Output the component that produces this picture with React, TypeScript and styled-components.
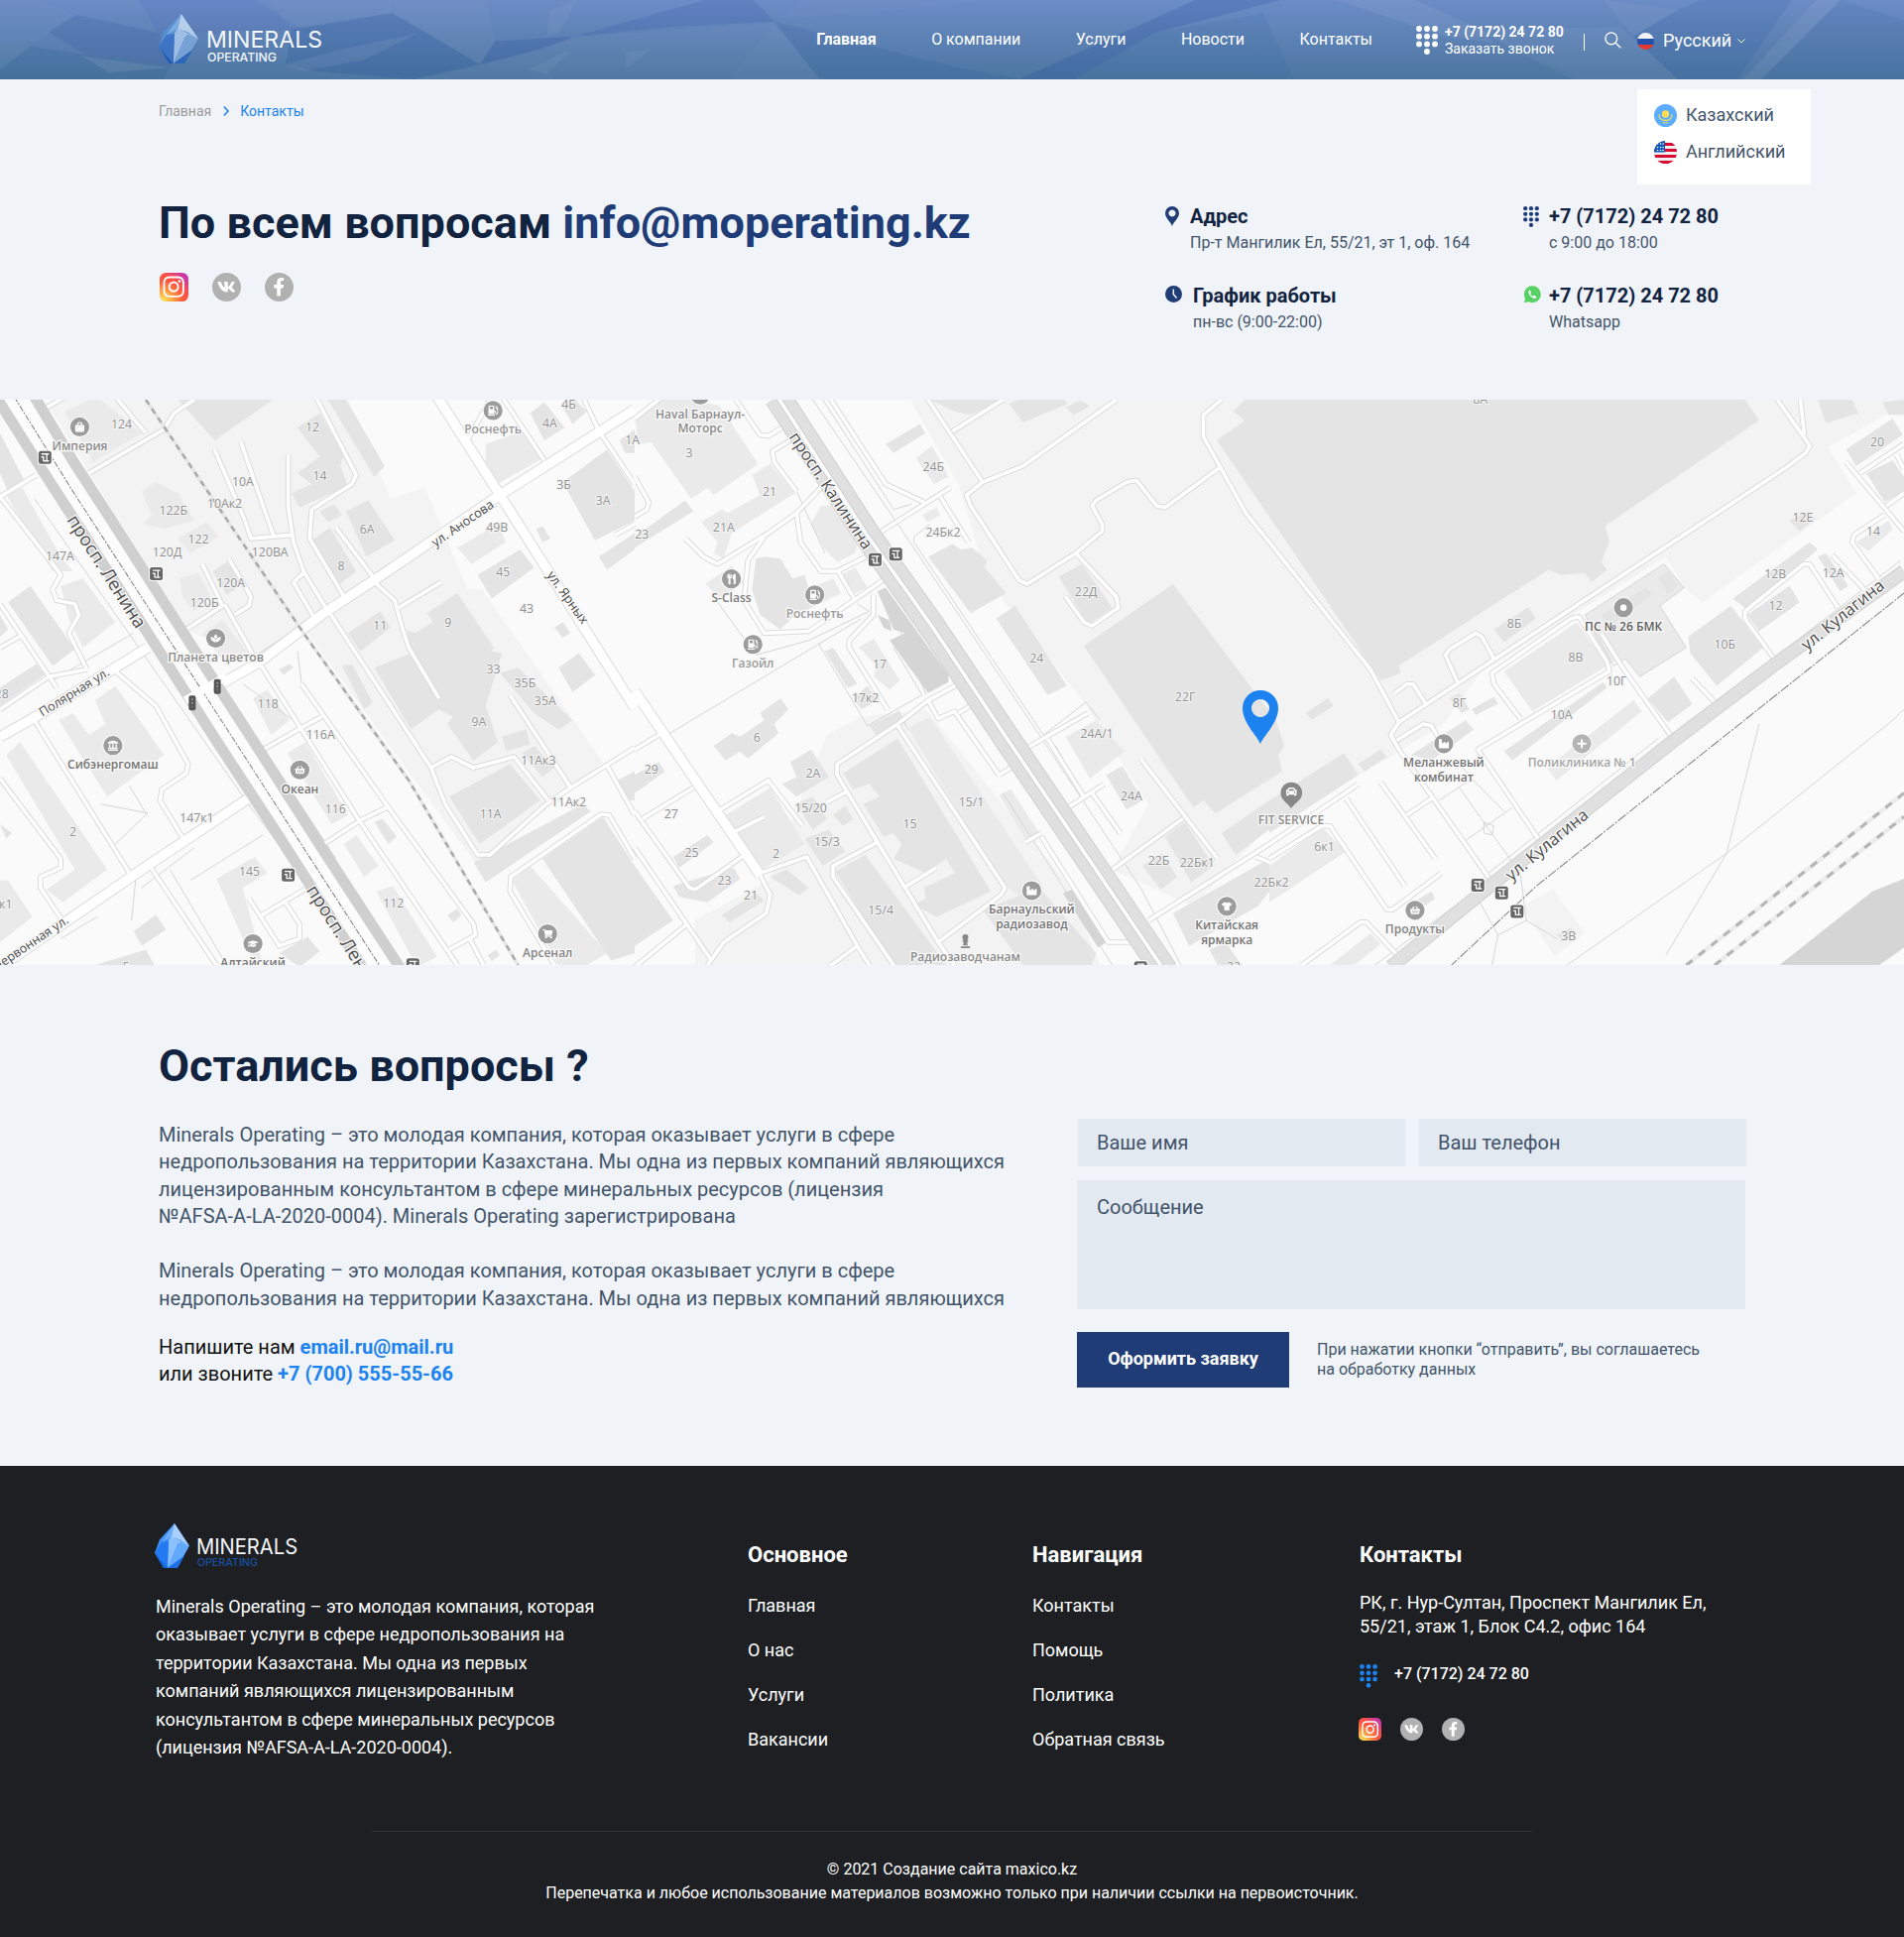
import React from 'react';
import styled, { createGlobalStyle } from 'styled-components';
import {
  FaShoppingBag, FaShoppingBasket, FaLandmark, FaGasPump, FaUtensils, FaIndustry, FaTshirt,
  FaShoppingCart, FaGraduationCap, FaPlus, FaCircle, FaCar, FaSpa, FaVk, FaFacebookF,
  FaInstagram, FaChessPawn,
} from 'react-icons/fa';

const GlobalStyle = createGlobalStyle`
  *, *::before, *::after { box-sizing: border-box; }
  html, body { margin: 0; padding: 0; }
  body { width: 1920px; background: #f0f4f9; font-family: Roboto, "Liberation Sans", sans-serif; color: #43546a; }
  h1, h2, h3, p, ul { margin: 0; padding: 0; }
  ul { list-style: none; }
  a { color: inherit; text-decoration: none; }
`;

const color = {
  ink: '#11233f', navy: '#203c76', slate: '#43546a', blue: '#1c82ef', field: '#e2e9f1', footer: '#1e1f23',
};

/* ---------- shared drawings ---------- */

const Crystal = ({ soft }: { soft?: boolean }) => (
  <g opacity={soft ? 0.86 : 1}>
    <path d="M20 0 L35 25 L23 50 L9 50 L0 33 L5 18Z" fill={soft ? '#5a95dc' : '#3f8df5'} />
    <path d="M20 0 L17 15 L7 21Z" fill={soft ? '#7fb3e6' : '#6aaefc'} />
    <path d="M20 0 L35 25 L25 18 L17 15Z" fill={soft ? '#c6dcf4' : '#a9d0ff'} />
    <path d="M17 15 L35 25 L14 20Z" fill="#eaf4ff" />
    <path d="M17 15 L25 19 L13 50 L14 20Z" fill={soft ? '#a9c8ec' : '#8cc0ff'} />
    <path d="M25 20 L35 25 L23 48 L13 50Z" fill={soft ? '#7da7dc' : '#63a9fb'} />
    <path d="M7 21 L14 20 L13 50 L0 33Z" fill={soft ? '#3973c8' : '#2379f2'} />
    <path d="M0 33 L9 50 L13 50Z" fill={soft ? '#1f57b4' : '#1161dd'} />
    <path d="M13 50 L30 36 L23 50Z" fill={soft ? '#2864bb' : '#1b6ee6'} />
  </g>
);

const LogoSvg = styled.svg`
  display: block;
  flex: none;
  overflow: visible;
`;

const Logo = ({ width, height, sub, soft }: { width: number; height: number; sub: string; soft?: boolean }) => (
  <LogoSvg width={width} height={height} viewBox="0 0 142 50" preserveAspectRatio="none">
    <g transform="scale(1.14 1)"><Crystal soft={soft} /></g>
    <text x="48" y="34.3" fill="#f4f7fb" fontFamily="Inter, Roboto, sans-serif" fontSize="23.3" fontWeight="400" textLength="117" lengthAdjust="spacingAndGlyphs">MINERALS</text>
    <text x="49" y="47.6" fill={sub} fontFamily="Inter, Roboto, sans-serif" fontSize="11.6" fontWeight="500" textLength="70" lengthAdjust="spacingAndGlyphs">OPERATING</text>
  </LogoSvg>
);

const Keypad = ({ width, fill }: { width: number; fill: string }) => (
  <LogoSvg width={width} height={width * 1.32} viewBox="0 0 22 29" fill={fill}>
    {[3, 10.7, 18.4].map((y) => [3, 11, 19].map((x) => <circle key={`${x}-${y}`} cx={x} cy={y} r="2.9" />))}
    <circle cx="11" cy="26" r="2.9" />
  </LogoSvg>
);

/* ---------- header ---------- */

const Header = styled.header`
  position: relative;
  height: 80px;
  padding: 0 160px;
  display: flex;
  align-items: center;
  background: linear-gradient(#6c8cc6, #4c76a1);
  color: #fff;
`;

const Facets = styled.svg`
  position: absolute;
  inset: 0;
`;

const HeaderLogo = styled.a`
  position: relative;
  margin: -2px auto 0 0;
`;

const Nav = styled.nav`
  position: relative;
  display: flex;
  gap: 55.5px;
  margin-right: 44px;
  font-size: 16px;
  line-height: 20px;
`;

const NavLink = styled.a<{ $active?: boolean }>`
  font-weight: ${(p) => (p.$active ? 700 : 400)};
`;

const CallBox = styled.div`
  position: relative;
  display: flex;
  align-items: center;
  gap: 7px;
  width: 169px;
  font-size: 14px;
  line-height: 17px;
  white-space: nowrap;
  margin-top: 1px;
`;

const Divider = styled.i`
  position: relative;
  width: 1px;
  height: 17px;
  margin: 4px 20px 0 0;
  background: #fff;
`;

const Lang = styled.div`
  position: relative;
  display: flex;
  align-items: center;
  width: 109px;
  margin: 2px 0 0 16px;
  font-size: 18px;
  line-height: 22px;
  svg:first-child { margin-right: 9px; }
  svg:last-child { margin-left: auto; }
`;

const LangMenu = styled.ul`
  position: absolute;
  z-index: 2;
  left: 1651px;
  top: 90px;
  width: 175px;
  height: 96px;
  padding: 15px 17px;
  display: grid;
  grid-auto-rows: 23px;
  gap: 14px;
  background: #fff;
  color: ${color.slate};
  font-size: 18px;
  line-height: 21px;
  li { display: flex; align-items: center; gap: 9px; }
  span { padding-bottom: 2px; }
`;

const facets: [string, string][] = [
  ['M0 210 50 140 140 165 280 200 270 240 0 240Z', 'rgba(30,80,130,.22)'],
  ['M80 95 125 45 262 100 285 200 140 165Z', 'rgba(50,80,160,.28)'],
  ['M135 170 280 205 180 220Z', 'rgba(255,255,255,.12)'],
  ['M228 0 420 0 500 90 262 105Z', 'rgba(60,90,190,.16)'],
  ['M0 0 60 0 125 45 50 140 0 210Z', 'rgba(255,255,255,.04)'],
  ['M440 0 645 0 645 40 480 85Z', 'rgba(255,255,255,.05)'],
  ['M480 90 645 40 790 195 680 240 520 215 470 195Z', 'rgba(30,75,150,.3)'],
  ['M470 195 560 150 690 100 600 180 500 215Z', 'rgba(255,255,255,.1)'],
  ['M645 0 800 0 815 125 790 195 650 40Z', 'rgba(255,255,255,.05)'],
  ['M815 125 945 110 890 150 790 195Z', 'rgba(30,70,160,.3)'],
  ['M945 110 1180 -10 1240 0 1275 65 1100 82Z', 'rgba(45,75,165,.26)'],
  ['M790 200 950 112 1275 68 1200 240 680 240Z', 'rgba(255,255,255,.05)'],
  ['M905 30 950 0 920 100 900 110Z M1030 160 1070 150 1030 210Z M870 210 940 150 900 225Z', 'rgba(255,255,255,.08)'],
  ['M1275 68 1350 240 1200 240Z', 'rgba(255,255,255,.07)'],
  ['M1275 65 1568 200 1678 240 1350 240Z', 'rgba(20,70,140,.16)'],
  ['M1320 0 1568 0 1650 0 1280 60Z', 'rgba(255,255,255,.04)'],
  ['M1678 240 1968 0 2108 0 1900 100 1770 240Z', 'rgba(30,70,160,.3)'],
  ['M1770 240 1900 100 2080 40 2130 240Z', 'rgba(30,90,150,.14)'],
  ['M2200 0 2330 0 2440 90 2460 130 2380 110Z', 'rgba(255,255,255,.1)'],
  ['M2430 90 2668 80 2763 240 2590 240Z', 'rgba(255,255,255,.07)'],
  ['M2640 0 2763 30 2688 110Z', 'rgba(255,255,255,.07)'],
  ['M2763 30 2800 0 2950 0 2860 240 2763 240 2688 110Z', 'rgba(30,80,160,.2)'],
  ['M2990 0 3030 0 2900 240 2870 240Z', 'rgba(255,255,255,.1)'],
  ['M3030 0 3135 60 3135 240 2900 240Z', 'rgba(30,80,150,.13)'],
];

const FlagRu = () => (
  <svg width="17" height="17" viewBox="0 0 20 20">
    <clipPath id="ru"><circle cx="10" cy="10" r="10" /></clipPath>
    <g clipPath="url(#ru)">
      <path fill="#f2f2f4" d="M0 0h20v7H0z" /><path fill="#2350ad" d="M0 7h20v7H0z" /><path fill="#e4382f" d="M0 14h20v6H0z" />
    </g>
  </svg>
);

const FlagKz = () => (
  <svg width="23" height="23" viewBox="0 0 23 23">
    <circle cx="11.5" cy="11.5" r="11.5" fill="#5badfd" />
    <circle cx="11.5" cy="10" r="3.7" fill="#ffdc55" />
    <path d="M5 10.500c0 3.500 2.500 6 6.500 6s6.500-2.500 6.500-6" stroke="#e8d96a" strokeWidth="1.500" fill="none" />
    <path d="M8.500 18.500q3 1 6 0" stroke="#e8d96a" fill="none" />
  </svg>
);

const FlagUs = () => (
  <svg width="23" height="23" viewBox="0 0 23 23">
    <clipPath id="us"><circle cx="11.5" cy="11.5" r="11.5" /></clipPath>
    <g clipPath="url(#us)">
      <path fill="#f4f1f2" d="M0 0h23v23H0z" />
      {[2, 8, 14, 20].map((y) => <path key={y} fill="#d80a30" d={`M0 ${y}h23v3H0z`} />)}
      <path fill="#0a57b5" d="M0 0h11v11.500H0z" />
      {[3, 6.500, 9.500].map((y) => [3.500, 6.500, 9].map((x) => <circle key={`${x}${y}`} cx={x} cy={y} r=".8" fill="#fff" />))}
    </g>
  </svg>
);

/* ---------- contacts ---------- */

const Hero = styled.section`
  height: 323px;
  padding: 22px 160px 0;
`;

const Crumbs = styled.nav`
  display: flex;
  align-items: center;
  height: 20px;
  font-size: 14px;
  color: #9b9b9b;
  svg { margin: 0 11px 0 12px; }
`;

const Current = styled.span`
  color: ${color.blue};
`;

const HeroGrid = styled.div`
  display: grid;
  grid-template-columns: 1015px 361px 1fr;
  margin-top: 76px;
`;

const Heading = styled.h1`
  font-size: 45px;
  line-height: 54px;
  font-weight: 700;
  letter-spacing: .03px;
  color: ${color.ink};
  white-space: nowrap;
  a { color: ${color.navy}; }
`;

const SocialRow = styled.div<{ $gap: number; $top: number; $left: number }>`
  display: flex;
  gap: ${(p) => p.$gap}px;
  margin: ${(p) => p.$top}px 0 0 ${(p) => p.$left}px;
`;

const SocialIcon = styled.a<{ $size: number; $insta?: boolean }>`
  display: grid;
  place-items: center;
  width: ${(p) => p.$size}px;
  height: ${(p) => p.$size}px;
  border-radius: ${(p) => (p.$insta ? '22%' : '50%')};
  color: #fff;
  background: ${(p) => (p.$insta
    ? 'radial-gradient(circle at 10% 100%, #ffdc55 5%, #ff9a45 30%, #ff543e 55%, transparent 80%), linear-gradient(45deg, #ff543e 50%, #c837ab 90%)'
    : '#b1b1b1')};
`;

const Social = ({ size, gap, top, left }: { size: number; gap: number; top: number; left: number }) => (
  <SocialRow $gap={gap} $top={top} $left={left}>
    <SocialIcon $size={size} $insta><FaInstagram size={size * 0.84} /></SocialIcon>
    <SocialIcon $size={size}><FaVk size={size * 0.64} /></SocialIcon>
    <SocialIcon $size={size}><FaFacebookF size={size * 0.64} /></SocialIcon>
  </SocialRow>
);

const ContactColumn = styled.div`
  padding-top: 7px;
`;

const Contact = styled.div<{ $gap: number }>`
  display: flex;
  gap: ${(p) => p.$gap}px;
  height: 80px;
  line-height: 26px;
  font-size: 16px;
  white-space: nowrap;
  > svg { flex: none; margin-top: 3px; }
`;

const ContactTitle = styled.h3`
  margin-bottom: 1px;
  font-size: 20px;
  font-weight: 700;
  color: ${color.ink};
`;

/* ---------- map ---------- */

const MapCanvas = styled.svg`
  display: block;
  background: #fafafa;
`;

const SX = 1 / 2.45;
const SY = 1 / 2.727;
const originX = [0, 640, 1280];

type Sheet = { land: string[]; light: string[]; mid: string[]; dark: string[]; roads: string[]; wide: string[]; thin: string[] };

const sheets: Sheet[] = [
  {
    land: ['120 20 130 8 860 8 965 280 1050 250 1155 530 1190 530 1490 1005 1180 1290 760 650 640 730 460 640 110 8'],
    light: ['160 40 240 0 350 100 230 180', '350 260 385 235 440 265 480 340 410 362 370 355 355 350 375 325', '440 390 510 345 540 385 470 430', '445 500 490 485 520 550 480 590 450 550', '500 650 550 615 610 700 560 740', '150 520 205 500 285 620 205 690 170 610', '145 890 180 870 220 930 260 900 235 835 285 795 405 985 265 1100', '15 985 50 950 265 1300 155 1390 115 1355 185 1300', '0 1330 20 1330 80 1430 0 1500', '535 1325 630 1265 660 1310 600 1350 650 1568 620 1540', '625 830 660 805 715 890 670 930', '710 980 755 950 860 1150 820 1175', '850 1230 880 1205 935 1290 900 1320', '930 1360 970 1345 1080 1540 1030 1568', '1130 415 1230 350 1250 400 1165 460', '1200 130 1300 90 1340 170 1230 240 1200 185', '1265 1330 1310 1290 1500 1530 1450 1563 1380 1563', '15 270 55 250 150 440 180 480 130 480'],
    mid: ['440 8 675 8 530 120', '735 85 790 45 850 160 840 190 860 245 740 305 720 265 770 240 735 210 790 165', '810 8 855 8 950 190 925 220', '790 315 825 295 845 325 810 345', '855 315 910 285 975 395 905 440', '770 395 815 360 880 480 840 515', '525 480 560 455 600 515 560 545', '860 650 940 590 965 635 890 700', '1005 640 1025 650 1070 620 1055 595 1130 540 1220 690 1215 700 1240 705 1200 850 1230 950 1170 1000 1105 900 1120 880 1085 860 1015 915 925 745 1015 705', '1110 1100 1260 1010 1335 1110 1185 1230', '1240 935 1300 915 1310 955 1250 975', '1235 760 1280 745 1415 890 1380 915 1320 870', '1290 980 1320 960 1370 1020 1340 1045', '1180 490 1285 420 1320 470 1215 555', '1380 745 1430 705 1470 765 1415 812', '1370 635 1390 620 1410 650 1390 663', '1325 365 1340 355 1360 390 1340 400', '1390 235 1500 145 1568 260 1568 340 1470 395', '1480 440 1568 375 1568 420 1500 475', '1310 45 1345 15 1395 85 1345 120', '1385 20 1420 8 1450 40 1415 75', '1530 120 1568 90 1568 155 1545 155', '20 565 75 520 185 695 130 740', '0 800 90 735 110 765 0 850', '0 100 60 230 20 260 0 210', '0 600 20 640 0 660', '0 1175 30 1200 15 1215', '330 1470 385 1425 410 1465 350 1510', '220 1568 360 1520 385 1568', '690 1530 760 1485 790 1525 740 1568', '925 1170 945 1160 980 1210 960 1230', '1340 1270 1490 1155 1568 1290 1568 1530 1510 1550', '1170 1280 1440 1120 1460 1140 1200 1335', '845 740 870 735 920 840 900 860', '1525 1055 1568 1030 1568 1110 1550 1110', '690 750 715 735 725 745 700 765', '1205 1535 1225 1520 1235 1535 1215 1552', '1105 1425 1130 1408 1140 1425 1120 1445'],
    dark: [],
    roads: ['0 275 90 215', '220 210 405 90 430 45 480 8', '0 275 130 460 150 490 130 530 140 560 185 570 195 600 170 650 215 750', '285 0 360 100', '530 145 605 340 620 390 720 380', '595 125 675 380', '712 160 712 300 725 400 750 480 810 590', '780 0 880 215 870 240 770 310 765 390 850 550', '750 485 725 510 775 605', '830 360 925 500', '925 510 975 560 995 640 1010 690 1085 830', '985 580 1090 510', '815 595 1065 1020 1100 1120 1180 1260 1210 1260 1350 1120 1410 1075 1568 965', '1065 1020 1115 990 1170 1020 1270 990 1355 1110', '1260 820 1410 1075', '1500 1015 1568 1150', '640 730 890 1170 1130 1563', '745 790 960 1130 1170 1450 1175 1480 1110 1520', '650 970 745 910 795 880', '800 1230 890 1165 955 1130', '460 640 550 575 500 460', '555 570 635 730', '565 445 620 550 615 575 580 600', '0 570 140 800', '0 690 55 655', '0 860 120 770 215 750', '285 755 385 850 465 1010 460 1035 400 1080 395 1110 450 1210', '85 890 320 1310', '0 1050 150 1270 150 1295 100 1320 100 1350 160 1450', '370 1290 535 1563', '615 1380 690 1510 740 1490 740 1450 705 1390', '640 1430 760 1350', '1150 130 1200 30 1210 8', '1240 0 1345 175', '1440 0 1480 95 1568 240', '1568 1270 1505 1150 1485 1148 1262 1320 1260 1360 1370 1563', '1160 1490 1195 1563', '1520 380 1568 350', '115 30 160 0'],
    wide: ['0 935 80 885 365 690', '490 825 640 730 800 595 930 500 1235 270 1568 35', '0 1568 370 1285 620 1100', '1080 0 1235 270 1568 855'],
    thin: ['85 280 620 1130 770 1350', '220 220 330 420 530 760 830 1270', '250 1120 365 1145 280 1235', '320 1070 360 1145', '420 1300 560 1563', '600 790 750 910 780 880', '130 780 330 650', '470 1330 650 1205', '350 1350 480 1240', '325 1440 335 1330', '150 1490 240 1430', '735 700 745 790', '620 720 860 545 1230 300'],
  },
  {
    land: ['680 8 1568 8 1568 1180 1380 1400 1180 1300 1270 1120 1110 840 870 500 800 240', '475 930 560 880 720 860 1070 1340 1150 1563 150 1563 150 1440 330 1330'],
    light: ['0 60 60 8 140 8 210 25 305 185 195 270 180 250 140 280 40 125 10 130', '290 215 335 185 395 265 360 290 240 375 220 445 195 430 205 400 165 345 215 310 230 320 310 270', '695 170 735 135 775 220 740 240', '435 350 460 300 500 300 550 400 545 430 500 455 470 420', '400 540 490 500 510 540 420 590', '510 490 545 470 575 525 545 540', '175 515 240 465 270 510 215 560', '555 690 590 665 655 780 630 805 590 770 600 740 580 720', '675 910 730 880 1010 1350 960 1380 900 1330', '225 1150 335 1075 420 1230 300 1310 235 1180', '900 1095 930 1080 1000 1200 970 1225', '1065 935 1140 890 1210 975 1125 1050', '710 325 745 305 755 325 725 345'],
    mid: ['0 385 125 285 145 315 0 415', '300 445 320 440 360 445 390 500 420 490 440 560 415 610 400 595 360 640 310 600 290 530', '620 130 705 75 718 100 640 155', '725 440 785 405 805 420 835 415 870 450 865 470 918 540 830 595', '893 610 940 575 1068 795 1020 820', '1048 495 1105 460 1180 580 1120 625', '1110 685 1330 515 1585 890 1605 960 1590 985 1600 1030 1435 1145 1405 1110 1380 1130', '470 700 490 690 550 790 525 800', '540 830 575 795 600 835 560 860', '195 960 240 925 260 935 320 890 310 870 360 830 380 860 345 900 355 925 280 995 260 975 225 1000', '385 1005 435 970 480 1045 400 1100 365 1065 400 1045', '0 1040 60 1005 75 1030 0 1090', '95 1265 180 1205 195 1225 110 1295', '515 1035 650 940 880 1360 745 1430 690 1395 720 1380 715 1350 790 1310 770 1270 720 1310 640 1270 660 1230 640 1200 615 1210 565 1120 605 1100 580 1065 540 1080', '495 1305 570 1260 770 1563 640 1563', '400 1120 440 1100 475 1160 440 1190', '490 1150 520 1125 540 1160 515 1180', '420 1215 480 1190 520 1250 465 1290', '335 1320 375 1300 430 1350 405 1370', '95 1345 245 1295 260 1325 180 1390 110 1375', '215 1425 300 1365 320 1385 235 1445', '0 1290 95 1440 0 1510', '860 1410 1000 1350 1140 1530 1130 1563 960 1563', '1165 1040 1205 1015 1255 1110 1215 1135', '1255 1290 1300 1255 1340 1320 1300 1355', '1310 1210 1360 1170 1430 1290 1375 1335', '1450 1200 1568 1110 1568 1190 1485 1260', '1330 1420 1568 1270 1568 1360 1540 1400 1370 1510', '1420 1520 1460 1500 1500 1563 1440 1563', '730 8 910 8 830 50 790 40', '925 20 950 8 1060 8 1070 20 960 70', '1065 30 1100 10 1125 25 1085 50', '580 905 650 865 670 895 600 935'],
    dark: ['600 535 620 525 775 765 775 785 725 815 630 670 668 650 640 640', '600 600 630 615 635 645 615 635', '1058 1365 1080 1355 1165 1500 1145 1515'],
    roads: ['720 0 860 235 960 190 1190 8', '785 95 910 8', '860 235 820 270 830 300 950 505 970 515 1090 430 1155 370 1155 350 1130 300 1140 285 1215 235 1240 230 1290 300 1310 305 1445 195', '1450 8 1405 50 1405 110 1450 200 1510 320 1568 400', '1090 430 1190 550 1195 580 1130 630 1110 620 1065 550', '610 370 780 250', '755 275 825 400', '480 0 620 240 715 290', '250 8 310 105 330 108 365 85', '385 120 340 150 345 180 400 260', '460 250 400 320 330 375 205 460 170 440 125 390', '400 320 410 400 460 480 500 480 590 430', '320 385 280 450 270 560 320 650 430 645 620 500', '500 475 545 560', '590 545 590 600 530 670 530 690 625 860', '800 790 725 835 650 900 500 1010 500 1040 600 1225 750 1500', '650 905 915 1350 905 1370 750 1500', '725 835 750 885 790 865 900 1040', '800 870 830 850', '475 1115 525 1085', '970 965 1120 870', '1020 940 1110 1100', '1070 1130 1160 1065', '1130 1090 1200 1200', '1180 1300 1355 1160', '1250 995 1440 1270', '1270 1440 1568 1230', '310 1310 425 1265 550 1510 485 1563', '550 1510 580 1563', '310 1315 335 1370 325 1420 220 1500 180 1563', '205 1140 330 1055 415 1180', '20 1160 145 1075', '0 970 60 930', '0 1140 135 1350 150 1355 265 1265', '0 1240 190 1550', '600 1225 490 1290 490 1320 640 1563', '665 1350 745 1295', '750 1500 790 1563', '0 220 35 290 30 310 0 330', '1005 1210 1170 1500 1230 1500', '965 1225 1005 1200', '900 1040 930 1020', '0 1568 130 1450', '240 1200 320 1155', '1535 1265 1568 1280', '0 60 60 8'],
    wide: ['0 810 310 1315'],
    thin: ['435 0 650 350 1000 930 1250 1350 1350 1563', '690 400 1010 930 1115 840 1150 890', '640 600 720 820', '455 680 575 905 710 820 640 690', '205 565 300 710 430 670 580 590 550 570', '80 930 560 610', '730 350 690 385 690 400', '460 0 640 310 685 295', '910 1090 1060 1350 1180 1563', '400 260 470 430', '650 860 675 915', '1040 960 1110 1100'],
  },
  {
    land: ['0 8 1568 8 1568 20 1380 140 1450 265 1070 565 1030 530 980 440 520 760 430 900 300 990 0 1180', '625 1400 700 1355 780 1475 705 1540'],
    light: ['580 755 760 620 835 740 650 865', '685 1020 900 835 920 865 710 1055', '0 1290 130 1185 190 1250 0 1390', '780 600 975 460 1025 525 965 575 1030 690 915 770 880 720 835 735', '1450 400 1530 340 1540 365 1480 425', '150 1563 250 1475 275 1505 210 1563'],
    mid: ['0 330 275 780 325 760 320 740 690 475 720 490 780 485 795 510 835 475 820 455 840 400 830 355 1210 65 1175 8 -60 8 -90 40 -60 65 -130 120', '555 640 640 578 658 610 580 675', '580 975 825 785 835 800 600 1000', '350 985 485 890 505 915 400 1000', '445 830 470 815 495 860 475 870', '500 860 555 825 565 845 510 875', '935 830 1000 770 1045 845 985 895', '1035 660 1140 575 1220 690 1105 795 1040 705', '1145 555 1335 400 1355 420 1180 585', '1180 600 1285 520 1310 565 1210 645', '1355 440 1375 430 1430 520 1410 535', '1285 340 1330 315 1350 335 1310 370', '1425 145 1540 60 1565 105 1450 190', '1475 210 1540 175 1568 220 1568 260 1520 290', '1355 8 1440 8 1455 45 1375 72', '960 500 985 480 1010 520 985 545', '820 600 930 525 945 545 835 635', '90 870 145 828 158 850 105 888', '220 1010 275 970 290 990 235 1030', '0 1110 185 980 220 1040 0 1200', '0 910 35 965 0 1000', '355 1390 400 1360 410 1380 370 1410', '1515 15 1568 8 1568 50 1530 50', '710 1480 745 1460 760 1475 725 1500'],
    dark: ['1260 1563 1490 1360 1568 1325 1568 1515 1500 1568'],
    roads: ['0 400 250 750 320 895 1270 200 1325 155 1335 135 1320 110 1255 8', '1322 105 1312 8', '320 895 300 930 320 970 550 1335', '315 945 380 900 400 905 425 950', '465 785 435 710 445 695 510 650 525 660 555 720', '390 850 355 790 340 790 310 815', '670 1225 515 970 840 755 835 730 765 605 745 610 550 760 555 790 620 885', '820 650 870 740 1000 945', '1250 725 1175 610 1175 590 1320 460 1335 460 1405 580', '1505 500 1440 400 1445 380 1520 325', '1425 180 1568 370', '1460 210 1568 130', '1525 300 1568 265', '1390 435 1470 530', '1045 775 1105 845', '0 1230 220 1065', '0 1270 130 1180 150 1180 290 1410 305 1410 425 1310', '190 1105 335 1345', '275 1060 410 1270', '340 1150 400 1105', '80 1563 225 1445 240 1445 320 1540', '1550 160 1568 200'],
    wide: [],
    thin: ['735 1563 1130 1255 1540 890 1568 860', '980 1535 1130 1255 1210 900', '470 1075 530 1170 620 1310 635 1440 710 1490', '485 1220 600 1130', '500 1050 580 1140', '420 1110 500 1050 470 1010', '530 1170 555 1180 550 1205 530 1200 530 1170', '520 1390 565 1480 635 1440', '565 1480 550 1563', '530 1320 960 940', '1000 930 1560 450', '260 1563 520 1350', '780 600 975 460 1025 525 965 575 1030 690 915 770 880 720 850 740 780 600'],
  },
];

const mapX = (sheet: number, x: number) => originX[sheet] + x * SX;
const mapY = (y: number) => 400 + y * SY;

const toPath = (pts: string) => {
  const n = pts.trim().split(/\s+/).map(Number);
  let d = '';
  for (let i = 0; i < n.length; i += 2) d += `${i ? 'L' : 'M'}${n[i]} ${n[i + 1]}`;
  return d;
};

const Layer = ({ pick, ...rest }: { pick: keyof Sheet } & React.SVGProps<SVGPathElement>) => (
  <>
    {sheets.map((s, i) => (
      <g key={i} transform={`translate(${originX[i]} 400) scale(${SX} ${SY})`}>
        {s[pick].map((p, k) => <path key={k} d={toPath(p)} vectorEffect="non-scaling-stroke" {...rest} />)}
      </g>
    ))}
  </>
);

const Line = ({ s, pts, ...rest }: { s: number; pts: string } & React.SVGProps<SVGPathElement>) => (
  <g transform={`translate(${originX[s]} 400) scale(${SX} ${SY})`}>
    <path d={toPath(pts)} fill="none" vectorEffect="non-scaling-stroke" {...rest} />
  </g>
);

const House = styled.text`
  font: 500 12.3px "Open Sans", "Noto Sans", sans-serif;
  fill: #929292;
  stroke: #f4f4f4;
  stroke-width: 2px;
  paint-order: stroke;
  text-anchor: middle;
`;

const Place = styled.text<{ $tone: string }>`
  font: 600 12px "Open Sans", "Noto Sans", sans-serif;
  fill: ${(p) => p.$tone};
  stroke: #f9f9f9;
  stroke-width: 2.5px;
  paint-order: stroke;
  text-anchor: middle;
`;

const Street = styled.text<{ $size: number }>`
  font: 500 ${(p) => p.$size}px "Open Sans", "Noto Sans", sans-serif;
  fill: #4c4c4c;
  stroke: #fafafa;
  stroke-width: 2.5px;
  paint-order: stroke;
  text-anchor: middle;
`;

const houses: [number, number, number, string][] = [
  [0, 300, 88, '124'], [0, 772, 95, '12'], [0, 790, 228, '14'], [0, 600, 246, '10А'], [0, 555, 305, '10Ак2'], [0, 428, 325, '122Б'],
  [0, 490, 404, '122'], [0, 148, 451, '147А'], [0, 413, 438, '120Д'], [0, 667, 440, '120ВА'], [0, 907, 377, '6А'], [0, 843, 477, '8'],
  [0, 570, 524, '120А'], [0, 505, 577, '120Б'], [0, 939, 642, '11'], [0, 1107, 633, '9'], [0, 1228, 370, '49В'], [0, 1243, 494, '45'],
  [0, 1301, 594, '43'], [0, 1358, 84, '4А'], [0, 1405, 32, '4Б'], [0, 1393, 254, '3Б'], [0, 1490, 298, '3А'], [0, 1562, 132, '1А'],
  [0, 1219, 760, '33'], [0, 1297, 800, '35Б'], [0, 1347, 848, '35А'], [0, 1183, 906, '9А'], [0, 1330, 1013, '11Ак3'], [0, 1405, 1127, '11Ак2'],
  [0, 1212, 1160, '11А'], [0, 662, 855, '118'], [0, 792, 941, '116А'], [0, 829, 1146, '116'], [0, 486, 1170, '147к1'], [0, 180, 1207, '2'],
  [0, 616, 1317, '145'], [0, 972, 1405, '112'], [0, 14, 1406, 'к1'], [0, 4, 830, '28'], [0, 312, 1580, '5'],
  [1, 135, 166, '3'], [1, 333, 273, '21'], [1, 220, 372, '21А'], [1, 18, 391, '23'], [1, 738, 205, '24Б'], [1, 762, 385, '24Бк2'],
  [1, 1115, 549, '22Д'], [1, 993, 730, '24'], [1, 605, 746, '17'], [1, 570, 840, '17к2'], [1, 1360, 837, '22Г'], [1, 1142, 938, '24А/1'],
  [1, 302, 950, '6'], [1, 441, 1047, '2А'], [1, 41, 1037, '29'], [1, 90, 1160, '27'], [1, 435, 1143, '15/20'], [1, 475, 1236, '15/3'],
  [1, 349, 1269, '2'], [1, 141, 1265, '25'], [1, 222, 1343, '23'], [1, 287, 1383, '21'], [1, 680, 1185, '15'], [1, 832, 1127, '15/1'],
  [1, 608, 1423, '15/4'], [1, 1227, 1109, '24А'], [1, 1295, 1286, '22Б'], [1, 1390, 1293, '22Бк1'], [1, 1573, 1347, '22Бк2'], [1, 1480, 1580, '22'],
  [2, 521, 18, '8А'], [2, 1502, 135, '20'], [2, 1318, 344, '12Е'], [2, 1492, 381, '14'], [2, 605, 636, '8Б'], [2, 757, 727, '8В'],
  [2, 1250, 499, '12В'], [2, 1393, 495, '12А'], [2, 1251, 587, '12'], [2, 1125, 693, '10Б'], [2, 858, 794, '10Г'], [2, 469, 853, '8Г'],
  [2, 722, 885, '10А'], [2, 136, 1249, '6к1'], [2, 739, 1495, '3В'],
];

const places: [number, number, number, string, string, any][] = [
  [0, 197, 83, 'Империя', '#8b8b8b', FaShoppingBag], [0, 533, 664, 'Планета цветов', '#8b8b8b', FaSpa],
  [0, 279, 959, 'Сибэнергомаш', '#757575', FaLandmark], [0, 741, 1026, 'Океан', '#757575', FaShoppingBasket],
  [0, 625, 1504, 'Алтайский', '#757575', FaGraduationCap], [0, 1353, 1477, 'Арсенал', '#858585', FaShoppingCart],
  [0, 1218, 38, 'Роснефть', '#9b9b9b', FaGasPump], [1, 162, -5, 'Haval Барнаул-|Моторс', '#8b8b8b', FaCar],
  [1, 239, 501, 'S-Class', '#7d7d7d', FaUtensils], [1, 445, 545, 'Роснефть', '#9b9b9b', FaGasPump],
  [1, 292, 681, 'Газойл', '#9b9b9b', FaGasPump], [1, 981, 1358, 'Барнаульский|радиозавод', '#757575', FaIndustry],
  [1, 1463, 1401, 'Китайская|ярмарка', '#757575', FaTshirt], [2, 875, 580, 'ПС № 26 БМК', '#5f5f5f', FaCircle],
  [2, 431, 954, 'Меланжевый|комбинат', '#757575', FaIndustry], [2, 772, 954, 'Поликлиника № 1', '#a5a5a5', FaPlus],
  [2, 360, 1412, 'Продукты', '#858585', FaShoppingBasket],
];

const streets: [number, number, number, string, number, number][] = [
  [0, 261, 482, 'просп. Ленина', 18.3, 57.5], [0, 853, 1500, 'просп. Ленина', 18.3, 57.5], [1, 483, 260, 'просп. Калинина', 16.6, 56.5],
  [0, 1144, 350, 'ул. Аносова', 12.8, -34.5], [0, 1401, 553, 'ул. Ярных', 13, 54.500], [0, 184, 814, 'Полярная ул.', 12.600, -32],
  [0, 77, 1504, 'Червонная ул.', 12.600, -34], [2, 1418, 602, 'ул. Кулагина', 16.800, -39], [2, 687, 1234, 'ул. Кулагина', 16.800, -39.500],
];

const stops: [number, number, number][] = [
  [0, 111, 167], [0, 386, 487], [0, 712, 1315], [0, 1020, 1562], [1, 594, 448], [1, 645, 433], [1, 1250, 1570], [2, 515, 1343], [2, 574, 1364], [2, 612, 1415],
];

const lights: [number, number][] = [[475, 842], [537, 797]];

const stroke = { fill: 'none', strokeLinejoin: 'round' as const, strokeLinecap: 'butt' as const };
const kalinin = '353 0 575 382 740 640 920 940 1310 1580';
const kulagin = '300 1568 545 1345 1000 945 1250 735 1568 480';

const CityMap = () => (
  <MapCanvas width="1920" height="570" viewBox="0 403 1920 570">
    <Layer pick="land" fill="#f3f3f3" />
    <Layer pick="light" fill="#eaeaea" />
    <Layer pick="mid" fill="#e4e4e4" />
    <Layer pick="dark" fill="#d5d5d5" />
    <Layer pick="thin" {...stroke} stroke="#d6d6d6" strokeWidth="1" />
    <Layer pick="roads" {...stroke} stroke="#dbdbdb" strokeWidth="5.6" />
    <Layer pick="wide" {...stroke} stroke="#dbdbdb" strokeWidth="11.500" />
    <Layer pick="roads" {...stroke} stroke="#fff" strokeWidth="3.6" />
    <Layer pick="wide" {...stroke} stroke="#fff" strokeWidth="9.500" />

    {/* Lenin avenue: two carriageways with a tram line between them */}
    <Line s={0} pts="40 0 150 205 490 795 940 1580" stroke="#fcfcfc" strokeWidth="32" />
    <Line s={0} pts="-10 0 115 220 365 650 530 938 690 1210 905 1585" stroke="#cfcfcf" strokeWidth="11" />
    <Line s={0} pts="85 0 185 185 270 330 435 618 520 765 625 945 790 1232 1000 1590" stroke="#cfcfcf" strokeWidth="11" />
    <Line s={0} pts="35 0 180 260 515 835 940 1568" stroke="#8a8a8a" strokeWidth="1.1" strokeDasharray="6 1.500 2 1.500" />
    <Line s={0} pts="458 835 560 768" stroke="#fff" strokeWidth="8" />

    {/* Kalinin avenue */}
    <Line s={1} pts={kalinin} stroke="#cfcfcf" strokeWidth="27.500" />
    <Line s={1} pts={kalinin} stroke="#e0e0e0" strokeWidth="25.500" />
    <Line s={1} pts={kalinin} stroke="#cfcfcf" strokeWidth="5.500" />
    <Line s={1} pts={kalinin} stroke="#fff" strokeWidth="3.500" />

    {/* Kulagin street and the lines beside it */}
    <Line s={2} pts={kulagin} stroke="#d0d0d0" strokeWidth="14" />
    <Line s={2} pts={kulagin} stroke="#e0e0e0" strokeWidth="12" />
    <Line s={2} pts="445 1568 660 1345 1568 540" stroke="#8a8a8a" strokeWidth="1.1" strokeDasharray="10 1.500 2 1.500" />
    {['1030 1563 1568 1090', '1100 1563 1568 1155'].map((p) => (
      <g key={p}>
        <Line s={2} pts={p} stroke="#ececec" strokeWidth="4.500" />
        <Line s={2} pts={p} stroke="#b4b4b4" strokeWidth="3" strokeDasharray="8 8" />
      </g>
    ))}
    <Line s={0} pts="360 8 750 650 1010 1055 1280 1563" stroke="#e6e6e6" strokeWidth="3.500" />
    <Line s={0} pts="360 8 750 650 1010 1055 1280 1563" stroke="#aaa" strokeWidth="2.500" strokeDasharray="6 5" />

    {houses.map(([s, x, y, t], i) => <House key={i} x={mapX(s, x)} y={mapY(y)}>{t}</House>)}
    {streets.map(([s, x, y, t, size, a], i) => (
      <Street key={i} $size={size} transform={`translate(${mapX(s, x)} ${mapY(y)}) rotate(${a})`} dy=".28em">{t}</Street>
    ))}
    {places.map(([s, x, y, t, tone, Icon], i) => {
      const cx = mapX(s, x);
      const cy = mapY(y);
      const size = Icon === FaCircle ? 7 : 10.5;
      return (
        <g key={i}>
          <circle cx={cx} cy={cy} r="10.500" fill="#fff" />
          <circle cx={cx} cy={cy} r="9.6" fill={tone === '#a5a5a5' ? '#b4b4b4' : '#9c9c9c'} />
          <Icon x={cx - size / 2} y={cy - size / 2} size={size} color="#fff" />
          {t.split('|').map((line, k) => <Place key={k} $tone={tone} x={cx} y={cy + 23.5 + k * 14.300}>{line}</Place>)}
        </g>
      );
    })}
    <path fill="#888" d="M1302 815 c-4-6-10.500-8-10.500-15.500 a10.800 10.800 0 0 1 21.600 0 c0 7.500-7 9.500-11.100 15.500z" />
    <FaChessPawn x="966" y="941" size={15} color="#888" />
    <FaCar x="1296.500" y="792.500" size={11.5} color="#fff" />
    <Place $tone="#8b8b8b" x={mapX(1, 817)} y={mapY(1551)}>Радиозаводчанам</Place>
    <Place $tone="#8b8b8b" x="1302" y="830.500">FIT SERVICE</Place>
    {stops.map(([s, x, y], i) => (
      <g key={i} transform={`translate(${mapX(s, x)} ${mapY(y)})`}>
        <rect x="-7.500" y="-7.500" width="15" height="15" rx="3" fill="#fff" />
        <rect x="-6.500" y="-6.500" width="13" height="13" rx="2.500" fill="#666" />
        <path d="M-3.500 -3.500H4 M1.800 -3V3.500 M4 3.500H-1 M-3.800 -.5H-1.500V4" stroke="#fff" strokeWidth="1.300" fill="none" />
      </g>
    ))}
    {lights.map(([x, y]) => (
      <g key={x} transform={`translate(${mapX(0, x)} ${mapY(y)})`}>
        <rect x="-3.500" y="-7.500" width="7" height="15" rx="2" fill="#555" />
        <circle cy="-3.500" r="1" fill="#999" /><circle r="1" fill="#999" /><circle cy="3.500" r="1" fill="#777" />
      </g>
    ))}
    <path fillRule="evenodd" fill="#1c82ef" d="M1271 750 C1268 742 1253 729 1253 714 a18 18 0 0 1 36 0 C1289 729 1274 742 1271 750Z M1271 705 a9 9 0 1 0 .01 0Z" />
  </MapCanvas>
);

/* ---------- questions ---------- */

const Questions = styled.section`
  display: grid;
  grid-template-columns: 926px 674px;
  height: 505px;
  padding: 75px 160px 0;
`;

const Copy = styled.p`
  margin-top: 28.5px;
  font-size: 20px;
  line-height: 27.500px;
  white-space: pre-line;
`;

const Write = styled.p`
  margin-top: 21.5px;
  font-size: 20px;
  line-height: 27px;
  color: #111;
  a { color: ${color.blue}; font-weight: 700; }
`;

const Form = styled.form`
  padding-top: 80px;
`;

const FieldRow = styled.div`
  display: grid;
  grid-template-columns: 330px 330px;
  gap: 14px;
  margin: 0 -1px 14px 1px;
`;

const fieldLook = `
  display: block;
  border: 0;
  border-radius: 0;
  outline: 0;
  resize: none;
  background: ${color.field};
  color: ${color.slate};
  font: 400 20px/24px Roboto, sans-serif;
  &::placeholder { color: ${color.slate}; opacity: 1; }
`;

const Input = styled.input`
  ${fieldLook}
  width: 330px;
  height: 48px;
  padding: 0 19px;
`;

const TextArea = styled.textarea`
  ${fieldLook}
  width: 674px;
  height: 130px;
  padding: 15px 20px;
`;

const SubmitRow = styled.div`
  display: flex;
  align-items: center;
  gap: 28px;
  margin-top: 23px;
  font-size: 16px;
  line-height: 20px;
  white-space: pre;
`;

const Submit = styled.button`
  width: 214px;
  height: 56px;
  padding: 0 0 3px;
  border: 0;
  background: ${color.navy};
  color: #fff;
  font: 700 18px Roboto, sans-serif;
`;

/* ---------- footer ---------- */

const Footer = styled.footer`
  height: 475px;
  padding: 58px 156px 0;
  background: ${color.footer};
  color: #fff;
`;

const FooterGrid = styled.div`
  display: grid;
  grid-template-columns: 598px 287px 330px 1fr;
  height: 310px;
  font-size: 18px;
`;

const About = styled.p`
  margin: 25px 0 0 1px;
  line-height: 28.400px;
  white-space: pre-line;
`;

const FooterColumn = styled.div`
  padding-top: 19px;
`;

const FooterTitle = styled.h3`
  font-size: 22px;
  line-height: 26px;
  font-weight: 700;
`;

const Links = styled.ul`
  margin-top: 15px;
  line-height: 45px;
`;

const Address = styled.p`
  margin-top: 23px;
  line-height: 24px;
  white-space: pre-line;
`;

const FooterPhone = styled.div`
  display: flex;
  gap: 17px;
  height: 24px;
  margin-top: 26px;
  font-size: 16px;
  line-height: 20px;
  font-weight: 500;
`;

const Legal = styled.div`
  width: 1170px;
  margin: 0 auto;
  padding-top: 26px;
  border-top: 1px solid #34353a;
  text-align: center;
  font-size: 16px;
  line-height: 24px;
`;

const intro = 'Minerals Operating – это молодая компания, которая оказывает услуги в сфере\nнедропользования на территории Казахстана. Мы одна из первых компаний являющихся';

export default function App() {
  return (
    <>
      <GlobalStyle />
      <Header>
        <Facets width="1920" height="80" viewBox="0 0 1920 80">
          <g transform="scale(.6125 .3333)" opacity=".65">{facets.map(([d, f], i) => <path key={i} d={d} fill={f} />)}</g>
        </Facets>
        <HeaderLogo><Logo width={142} height={50} sub="#f4f7fb" soft /></HeaderLogo>
        <Nav>
          <NavLink $active>Главная</NavLink>
          <NavLink>О компании</NavLink>
          <NavLink>Услуги</NavLink>
          <NavLink>Новости</NavLink>
          <NavLink>Контакты</NavLink>
        </Nav>
        <CallBox>
          <Keypad width={22} fill="#fff" />
          <div><b>+7 (7172) 24 72 80</b><br />Заказать звонок</div>
        </CallBox>
        <Divider />
        <LogoSvg width="17" height="17" viewBox="0 0 17 17" fill="none" stroke="#fff" strokeWidth="1.4">
          <circle cx="6.800" cy="6.800" r="5.900" /><path d="M11 11l5.300 5.300" />
        </LogoSvg>
        <Lang>
          <FlagRu />Русский
          <svg width="8" height="5" viewBox="0 0 8 5" fill="none" stroke="#fff" strokeWidth="1"><path d="M.5 .5L4 4L7.500 .5" /></svg>
        </Lang>
        <LangMenu>
          <li><FlagKz /><span>Казахский</span></li>
          <li><FlagUs /><span>Английский</span></li>
        </LangMenu>
      </Header>

      <Hero>
        <Crumbs>
          Главная
          <svg width="6" height="10" viewBox="0 0 6 10" fill="none" stroke={color.blue} strokeWidth="1.500"><path d="M.8 .6L5 5L.8 9.400" /></svg>
          <Current>Контакты</Current>
        </Crumbs>
        <HeroGrid>
          <div>
            <Heading>По всем вопросам <a>info@moperating.kz</a></Heading>
            <Social size={29} gap={24} top={23} left={1} />
          </div>
          <ContactColumn>
            <Contact $gap={11}>
              <svg width="14" height="20" viewBox="0 0 14 20"><path fillRule="evenodd" fill={color.navy} d="M7 20C5.500 15.500 0 12 0 7a7 7 0 0 1 14 0c0 5-5.500 8.500-7 13zM7 3.400a3.600 3.600 0 1 0 .01 0z" /></svg>
              <div><ContactTitle>Адрес</ContactTitle>Пр-т Мангилик Ел, 55/21, эт 1, оф. 164</div>
            </Contact>
            <Contact $gap={11}>
              <svg width="17" height="17" viewBox="0 0 17 17"><circle cx="8.500" cy="8.500" r="8.500" fill={color.navy} /><path d="M8.300 3.500V8.800L11.600 12.600" fill="none" stroke="#f0f4f9" strokeWidth="1.500" /></svg>
              <div><ContactTitle>График работы</ContactTitle>пн-вс (9:00-22:00)</div>
            </Contact>
          </ContactColumn>
          <ContactColumn>
            <Contact $gap={10}>
              <Keypad width={16} fill={color.navy} />
              <div><ContactTitle>+7 (7172) 24 72 80</ContactTitle>с 9:00 до 18:00</div>
            </Contact>
            <Contact $gap={8}>
              <svg width="18" height="18" viewBox="0 0 18 18">
                <circle cx="9.300" cy="8.700" r="8.500" fill="#57d163" /><path d="M1 17.300L2.200 12.500L6 16Z" fill="#57d163" />
                <path d="M6.300 4.600c-1.500 1-1.300 3 .4 5.200 2 2.500 4.300 3.900 6.100 2.600l.5-1.500-2.300-1.200-1.200 1c-1.300-.5-2.200-1.500-2.700-2.700l.8-1-.8-2.300z" fill="#fff" />
              </svg>
              <div><ContactTitle>+7 (7172) 24 72 80</ContactTitle>Whatsapp</div>
            </Contact>
          </ContactColumn>
        </HeroGrid>
      </Hero>

      <CityMap />

      <Questions>
        <div>
          <Heading as="h2">Остались вопросы ?</Heading>
          <Copy>{`${intro}\nлицензированным консультантом в сфере минеральных ресурсов (лицензия\n№AFSA-A-LA-2020-0004). Minerals Operating зарегистрирована\n\n${intro}`}</Copy>
          <Write>Напишите нам <a>email.ru@mail.ru</a><br />или звоните <a>+7 (700) 555-55-66</a></Write>
        </div>
        <Form>
          <FieldRow>
            <Input placeholder="Ваше имя" />
            <Input placeholder="Ваш телефон" />
          </FieldRow>
          <TextArea placeholder="Сообщение" />
          <SubmitRow>
            <Submit type="button">Оформить заявку</Submit>
            <span>{'При нажатии кнопки “отправить”, вы соглашаетесь\nна обработку данных'}</span>
          </SubmitRow>
        </Form>
      </Questions>

      <Footer>
        <FooterGrid>
          <div>
            <Logo width={124} height={45} sub="#17509f" />
            <About>{'Minerals Operating – это молодая компания, которая\nоказывает услуги в сфере недропользования на\nтерритории Казахстана. Мы одна из первых\nкомпаний являющихся лицензированным\nконсультантом в сфере минеральных ресурсов\n(лицензия №AFSA-A-LA-2020-0004).'}</About>
          </div>
          <FooterColumn>
            <FooterTitle>Основное</FooterTitle>
            <Links><li>Главная</li><li>О нас</li><li>Услуги</li><li>Вакансии</li></Links>
          </FooterColumn>
          <FooterColumn>
            <FooterTitle>Навигация</FooterTitle>
            <Links><li>Контакты</li><li>Помощь</li><li>Политика</li><li>Обратная связь</li></Links>
          </FooterColumn>
          <FooterColumn>
            <FooterTitle>Контакты</FooterTitle>
            <Address>{'РК, г. Нур-Султан, Проспект Мангилик Ел,\n55/21, этаж 1, Блок С4.2, офис 164'}</Address>
            <FooterPhone><Keypad width={18} fill={color.blue} />+7 (7172) 24 72 80</FooterPhone>
            <Social size={23} gap={19} top={30} left={-1} />
          </FooterColumn>
        </FooterGrid>
        <Legal>
          © 2021 Создание сайта maxico.kz<br />
          Перепечатка и любое использование материалов возможно только при наличии ссылки на первоисточник.
        </Legal>
      </Footer>
    </>
  );
}
